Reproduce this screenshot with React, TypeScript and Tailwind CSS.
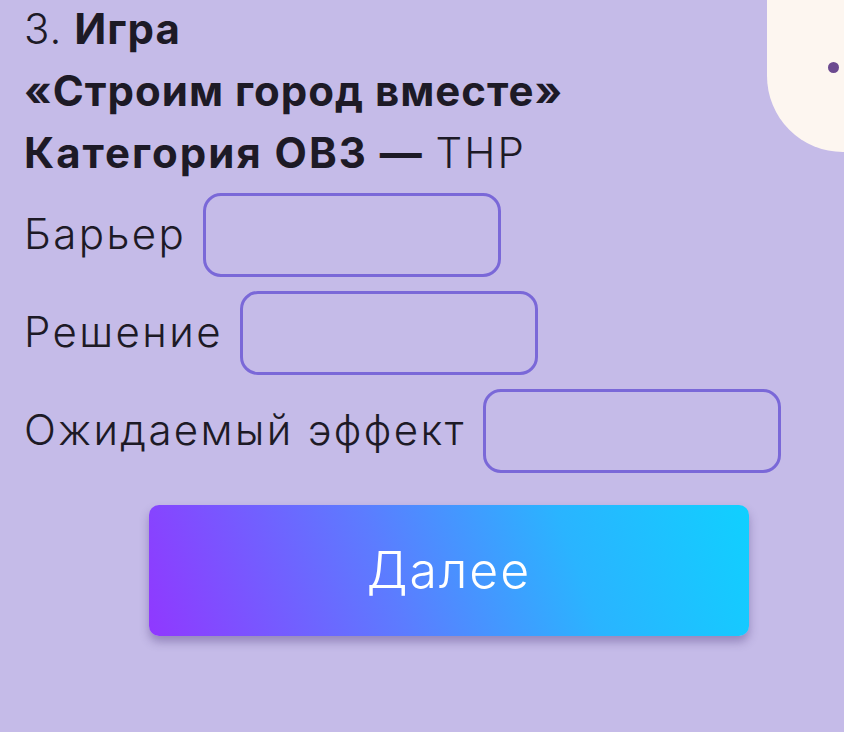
import React from "react";

export default function App() {
  const font = { fontFamily: "Inter, 'Noto Sans', sans-serif" };
  return (
    <div className="relative w-[844px] h-[732px] overflow-hidden bg-[#c5bbe8] text-[#1d1a26]" style={font}>
      <div className="absolute right-0 top-0 w-[77px] h-[152px] rounded-bl-[76px] bg-[#fdf6f0]">
        <div className="absolute left-[61px] top-[62px] w-[11px] h-[11px] rounded-full bg-[#6c4a90]" />
      </div>
      <div className="pl-[24px] text-[42px] leading-[62px] -mt-[2px]">
        <div>
          <span className="font-light tracking-[1px]">3.</span>{" "}
          <span className="font-bold tracking-[1px]">Игра</span>
        </div>
        <div className="font-bold tracking-[1px]">«Строим город вместе»</div>
        <div>
          <span className="font-bold tracking-[2px]">Категория ОВЗ —</span>{" "}
          <span className="font-light tracking-[2px]">ТНР</span>
        </div>
      </div>
      <div className="mt-[9px] pl-[24px] flex flex-col gap-[14px]">
        {["Барьер", "Решение", "Ожидаемый эффект"].map((l) => (
          <div key={l} className="flex items-center gap-[17px]">
            <span className="text-[42px] font-light leading-none tracking-[2.4px] -mt-[3px]">{l}</span>
            <div className="w-[298px] h-[84px] rounded-[18px] border-[3px] border-[#7a68d8]" />
          </div>
        ))}
      </div>
      <div className="mt-[32px] ml-[149px] w-[600px] h-[131px] rounded-[10px] flex items-center justify-center text-white text-[50px] font-light tracking-[2px] bg-[linear-gradient(70deg,#9038ff_0%,#5c7cff_40%,#2ab4ff_70%,#10d0ff_100%)] shadow-[0_6px_10px_rgba(60,40,110,0.35)]">
        Далее
      </div>
    </div>
  );
}
